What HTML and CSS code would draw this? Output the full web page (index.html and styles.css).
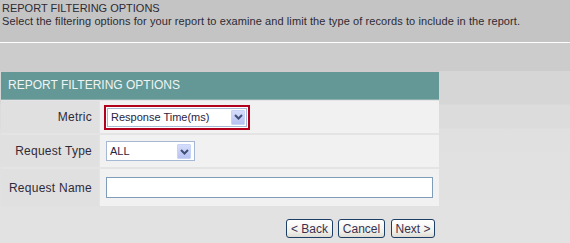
FILE: index.html
```html
<!DOCTYPE html>
<html lang="en">
<head>
    <meta charset="UTF-8">
    <title>Report Filtering Options</title>
    <link rel="stylesheet" href="styles.css">
</head>
<body>
    <div class="intro">
        <h1 class="intro-title">REPORT FILTERING OPTIONS</h1>
        <p class="intro-text">Select the filtering options for your report to examine and limit the type of records to include in the report.</p>
    </div>
    <div class="band"></div>
    <div class="content">
        <form class="filter-panel" name="filterform">
            <div class="panel-head">REPORT FILTERING OPTIONS</div>
            <div class="panel-grid">
                <label class="cell-label" for="metric">Metric</label>
                <div class="cell-value">
                    <span class="highlight">
                        <span class="select select-metric">
                            <select id="metric" name="metric">
                                <option>Response Time(ms)</option>
                            </select>
                            <span class="arrow"><svg width="9" height="6" viewBox="0 0 9 6"><path d="M1 1 L4.5 4.5 L8 1" fill="none" stroke="#3f4f78" stroke-width="2"/></svg></span>
                        </span>
                    </span>
                </div>

                <label class="cell-label" for="reqtype">Request Type</label>
                <div class="cell-value">
                    <span class="select select-type">
                        <select id="reqtype" name="reqtype">
                            <option>ALL</option>
                        </select>
                        <span class="arrow"><svg width="9" height="6" viewBox="0 0 9 6"><path d="M1 1 L4.5 4.5 L8 1" fill="none" stroke="#3f4f78" stroke-width="2"/></svg></span>
                    </span>
                </div>

                <label class="cell-label" for="reqname">Request Name</label>
                <div class="cell-value">
                    <input class="text-input" type="text" id="reqname" name="reqname">
                </div>
            </div>
            <div class="actions">
                <button type="button" class="btn btn-back">&lt; Back</button>
                <button type="button" class="btn btn-cancel">Cancel</button>
                <button type="button" class="btn btn-next">Next &gt;</button>
            </div>
        </form>
    </div>
</body>
</html>
```

FILE: styles.css
```css
body{
    margin: 0;
    height: 243px;
    overflow: hidden;
    font-family: "Liberation Sans", Arial, sans-serif;
    color: #333;
    background-color: #e2e2e2;
}
.intro{
    height: 43px;
    box-sizing: border-box;
    padding: 2px 2px 0;
    background-color: #c4c4c4;
    border-bottom: 1px solid #fff;
    color: #2e2a33;
}
.intro-title, .intro-text{
    margin: 0;
    font-size: 11px;
    font-weight: normal;
    line-height: 13px;
}
.intro-text{
    letter-spacing: 0.09px;
}
.band{
    height: 28px;
    background-color: #cccccc;
}
.content{
    padding-left: 1px;
    background: linear-gradient(#d6d6d6 0, #d6d6d6 33px, #dcdcdc 34px, #dcdcdc 57px, #e0e0e0 58px, #e2e2e2 100%);
}
.filter-panel{
    width: 438px;
    margin: 0;
}
.panel-head{
    height: 27px;
    padding-left: 7px;
    border-top: 1px solid #d2cbcb;
    border-bottom: 1px solid #8fb0ae;
    background-color: #639896;
    color: #eef4f4;
    font-size: 12px;
    line-height: 27px;
}
.panel-grid{
    display: grid;
    grid-template-columns: 98px 1fr;
    grid-template-rows: 32px 32px 37px;
    column-gap: 1px;
    row-gap: 2px;
    padding-top: 1px;
    background-color: #e4e4e4;
}
.cell-label{
    display: flex;
    align-items: center;
    justify-content: flex-end;
    padding-right: 7px;
    background-color: #e0e0e0;
    font-size: 12px;
    letter-spacing: 0.25px;
    color: #2f2a38;
}
.cell-value{
    display: flex;
    align-items: center;
    padding-left: 6px;
    background-color: #f1f1f1;
}
.highlight{
    display: flex;
    margin-left: -2px;
    padding: 1px;
    border: 2px solid #b2001c;
    background-color: #fff;
}
.select{
    position: relative;
    display: block;
    box-sizing: border-box;
    border: 1px solid #a5b9d4;
    background-color: #fff;
}
.select select{
    -webkit-appearance: none;
    appearance: none;
    display: block;
    width: 100%;
    height: 100%;
    margin: 0;
    padding: 0 0 0 3px;
    border: none;
    background: transparent;
    font-family: "Liberation Sans", Arial, sans-serif;
    font-size: 11px;
    color: #2a2440;
    outline: none;
}
.select-metric{
    width: 140px;
    height: 19px;
}
.select-type{
    width: 89px;
    height: 20px;
}
.arrow{
    position: absolute;
    top: 1px;
    right: 1px;
    display: flex;
    align-items: center;
    justify-content: center;
    width: 14px;
    height: 15px;
    box-sizing: border-box;
    border: 1px solid #c8d3f8;
    border-radius: 1px;
    background: linear-gradient(#d6ddfb, #b8c2f1);
    pointer-events: none;
}
.select-type .arrow{
    right: 3px;
    top: 2px;
}
.text-input{
    width: 327px;
    height: 21px;
    box-sizing: border-box;
    margin: 0;
    border: 1px solid #7f9db9;
    background-color: #fff;
    outline: none;
}
.actions{
    display: flex;
    justify-content: flex-end;
    gap: 5px;
    padding: 13px 4px 0 0;
}
.btn{
    height: 19px;
    box-sizing: border-box;
    margin: 0;
    padding: 0;
    border: 1px solid #1d3f66;
    border-radius: 3px;
    background: linear-gradient(#ffffff, #f0f0ea 70%, #dcdcd4);
    font-family: "Liberation Sans", Arial, sans-serif;
    font-size: 12px;
    color: #3a3150;
}
.btn-back{
    width: 47px;
}
.btn-cancel{
    width: 47px;
}
.btn-next{
    width: 44px;
    margin-left: 1px;
}
```
